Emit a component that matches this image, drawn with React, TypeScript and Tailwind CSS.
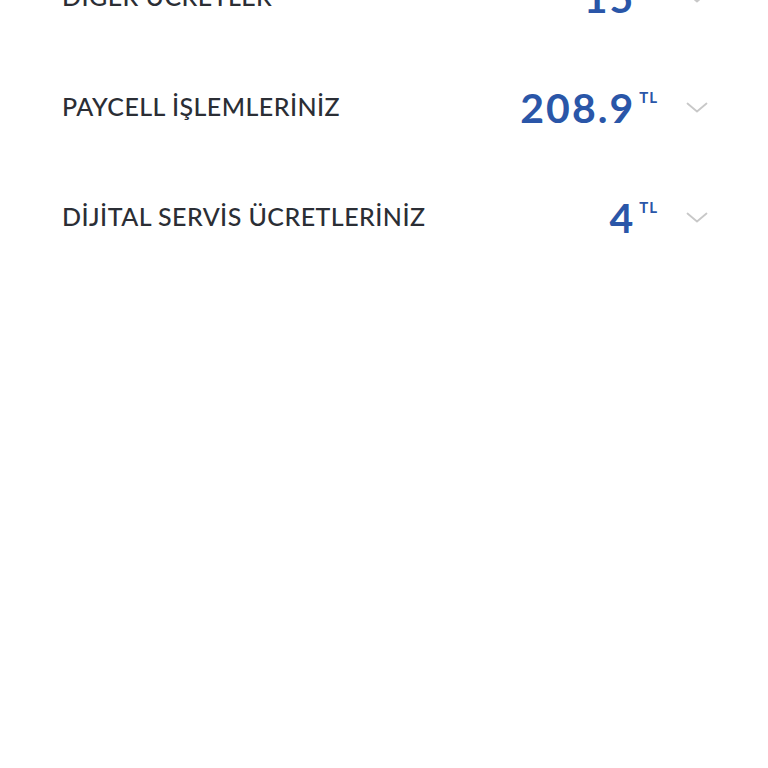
const rows = [
  { label: 'DİĞER ÜCRETLER', amount: '15' },
  { label: 'PAYCELL İŞLEMLERİNİZ', amount: '208.9' },
  { label: 'DİJİTAL SERVİS ÜCRETLERİNİZ', amount: '4' },
];

const Chevron = () => (
  <svg width="22" height="11" viewBox="0 0 22 11" className="ml-[28px] shrink-0">
    <polyline points="1.5,1.5 11,9.5 20.5,1.5" fill="none" stroke="#c8c8c8" strokeWidth="1.8" strokeLinecap="round" strokeLinejoin="round" />
  </svg>
);

const FeeRow = ({ label, amount }: { label: string; amount: string }) => (
  <div className="flex h-[110px] items-center pl-[62px] pr-[60px]">
    <span className="flex-1 text-[25px] font-medium tracking-[0.45px] text-[#2b2e35]">{label}</span>
    <div className="flex items-start text-[#2a56a8]">
      <span className="text-[41px] font-bold leading-none tracking-[2px]">{amount}</span>
      <span className="ml-[4px] mt-[3px] text-[15px] font-bold leading-none tracking-[1px]">TL</span>
    </div>
    <Chevron />
  </div>
);

export default function App() {
  return (
    <div className="h-[768px] w-[768px] overflow-hidden bg-white" style={{ fontFamily: 'Lato, "Open Sans", sans-serif' }}>
      <div className="-mt-[58px] flex flex-col">
        {rows.map(r => <FeeRow key={r.label} {...r} />)}
      </div>
    </div>
  );
}
